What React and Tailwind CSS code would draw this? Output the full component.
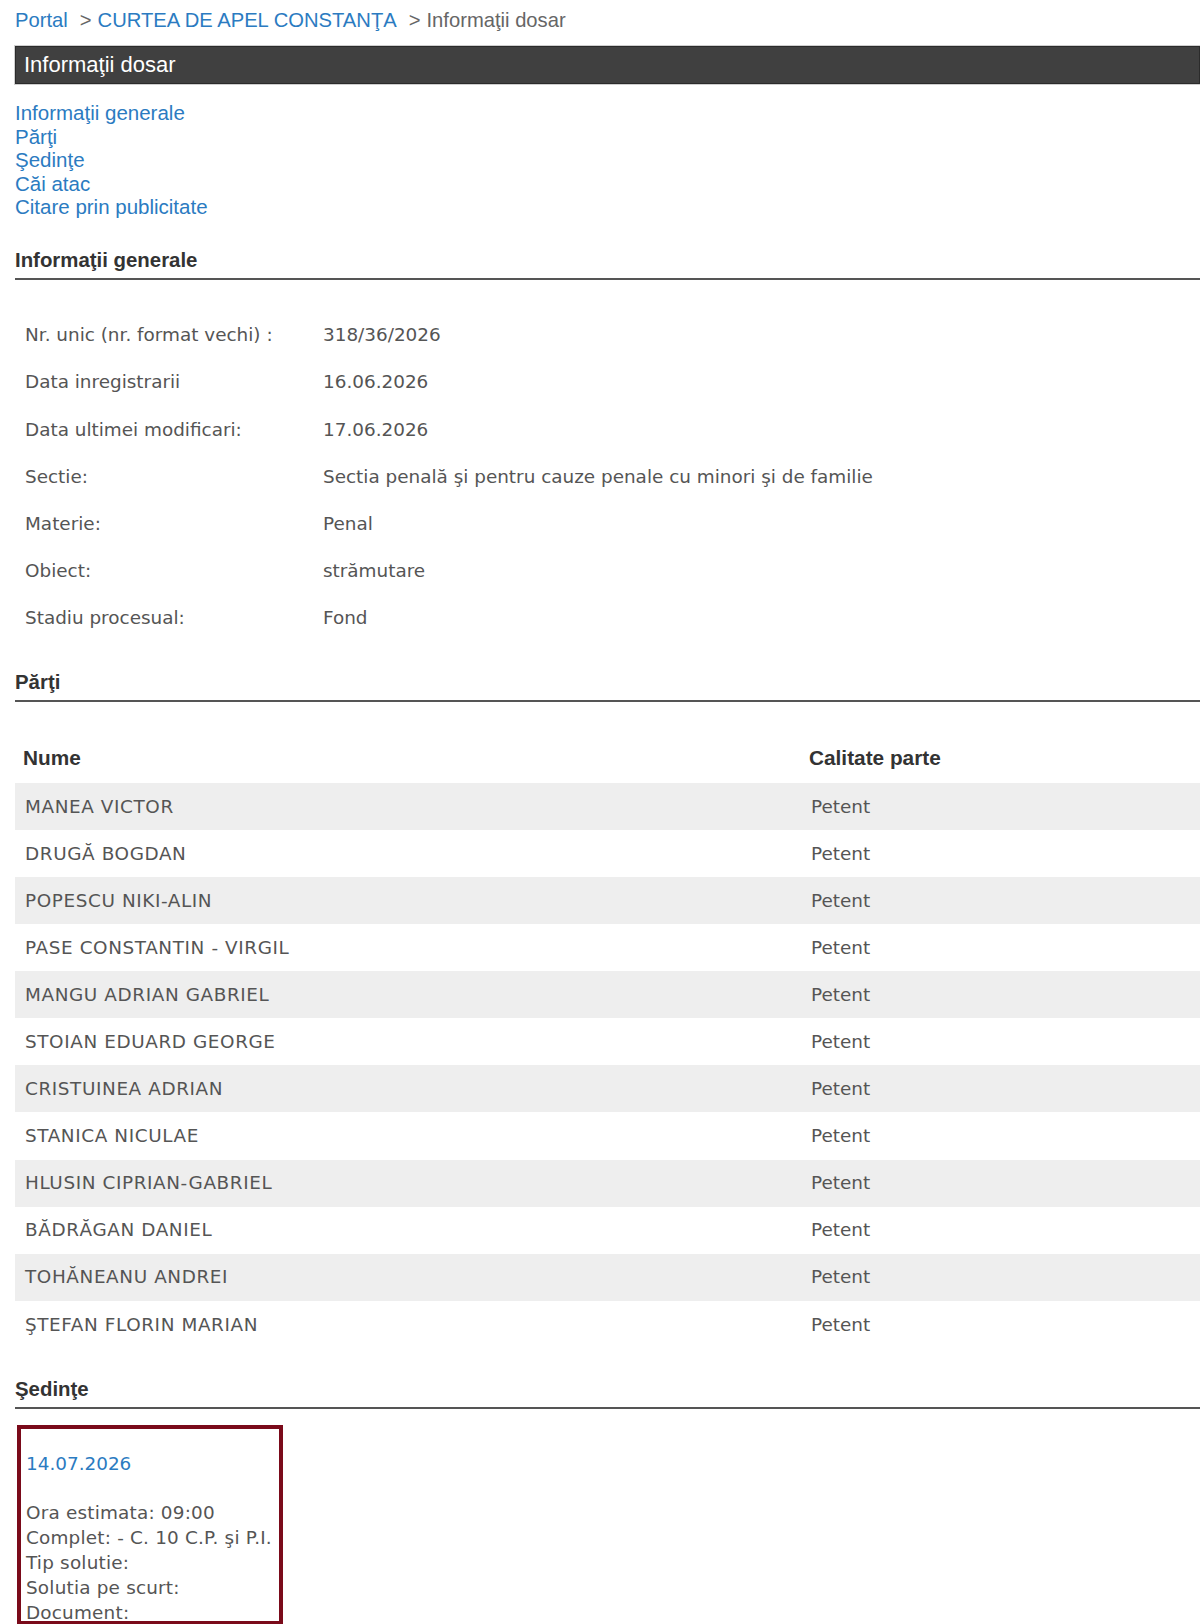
import React from 'react';

// Static case file page: breadcrumb, title bar, anchors, general info, parties, hearings
const LINKS = ['Informaţii generale', 'Părţi', 'Şedinţe', 'Căi atac', 'Citare prin publicitate'];

const GENERAL_INFO = [
    ['Nr. unic (nr. format vechi) :', '318/36/2026'],
    ['Data inregistrarii', '16.06.2026'],
    ['Data ultimei modificari:', '17.06.2026'],
    ['Sectie:', 'Sectia penală şi pentru cauze penale cu minori şi de familie'],
    ['Materie:', 'Penal'],
    ['Obiect:', 'strămutare'],
    ['Stadiu procesual:', 'Fond'],
];

const PARTIES = [
    'MANEA VICTOR',
    'DRUGĂ BOGDAN',
    'POPESCU NIKI-ALIN',
    'PASE CONSTANTIN - VIRGIL',
    'MANGU ADRIAN GABRIEL',
    'STOIAN EDUARD GEORGE',
    'CRISTUINEA ADRIAN',
    'STANICA NICULAE',
    'HLUSIN CIPRIAN-GABRIEL',
    'BĂDRĂGAN DANIEL',
    'TOHĂNEANU ANDREI',
    'ŞTEFAN FLORIN MARIAN',
];

const HEARING_LINES = [
    'Ora estimata: 09:00',
    'Complet: - C. 10 C.P. şi P.I.',
    'Tip solutie:',
    'Solutia pe scurt:',
    'Document:',
];

function SectionHeading({ children, className = '' }) {
    return (
        <div className={`pb-[6px] border-b-2 border-[#555555] ${className}`}>
            <h2 className="text-[20.4px] leading-6 font-bold text-[#333333]">{children}</h2>
        </div>
    );
}

export default function App() {
    return (
        <div className="min-h-[1624px] bg-white pl-[15px] pt-2 font-['Liberation_Sans',Arial,sans-serif] overflow-hidden">
            {/* breadcrumb */}
            <div className="flex items-center h-6 text-[20.2px] leading-6 whitespace-nowrap">
                <a className="text-[#2b7bc1]">Portal</a>
                <span className="ml-[12px] mr-[6px] text-[#666666]">&gt;</span>
                <a className="text-[#2b7bc1]">CURTEA DE APEL CONSTANŢA</a>
                <span className="ml-[12px] mr-[6px] text-[#666666]">&gt;</span>
                <span className="text-[#666666]">Informaţii dosar</span>
            </div>

            {/* title bar */}
            <div className="mt-[14px] h-[38px] flex items-center pl-2 bg-[#404040] border border-[#2b2b2b] shadow-[0_0_0_1px_#cfcfcf]">
                <span className="text-white text-[22px] leading-9">Informaţii dosar</span>
            </div>

            {/* anchors */}
            <nav className="mt-[17px] flex flex-col text-[20.5px] leading-[23.5px]">
                {LINKS.map(link => (
                    <a key={link} className="text-[#2b7bc1] w-fit">{link}</a>
                ))}
            </nav>

            <SectionHeading className="mt-[29px]">Informaţii generale</SectionHeading>

            <div className="mt-[32px] font-['DejaVu_Sans',sans-serif] text-[18.4px] text-[#555555]">
                {GENERAL_INFO.map(([label, value]) => (
                    <div key={label} className="h-[47.2px] pl-[10px] grid grid-cols-[298px_1fr] items-center">
                        <span>{label}</span>
                        <span>{value}</span>
                    </div>
                ))}
            </div>

            <SectionHeading className="mt-[28px]">Părţi</SectionHeading>

            <div className="mt-[31px]">
                <div className="h-[50px] grid grid-cols-[786px_1fr] items-center text-[20.8px] font-bold text-[#333333]">
                    <span className="pl-[8px]">Nume</span>
                    <span className="pl-[8px]">Calitate parte</span>
                </div>
                <div className="font-['DejaVu_Sans',sans-serif] text-[18.4px] text-[#555555]">
                    {PARTIES.map((name, i) => (
                        <div
                            key={name}
                            className={`h-[47.1px] grid grid-cols-[786px_1fr] items-center ${i % 2 === 0 ? 'bg-[#eeeeee]' : 'bg-white'}`}
                        >
                            <span className="pl-[10px] tracking-[0.6px]">{name}</span>
                            <span className="pl-[10px]">Petent</span>
                        </div>
                    ))}
                </div>
            </div>

            <SectionHeading className="mt-[29px]">Şedinţe</SectionHeading>

            {/* hearing card */}
            <div className="mt-[16px] ml-[2px] w-[266px] h-[200px] border-4 border-[#7a0a1a] overflow-hidden pl-[5px] pt-[23px] font-['DejaVu_Sans',sans-serif] text-[18.4px] whitespace-nowrap">
                <div className="leading-6 text-[#2b7bc1]">14.07.2026</div>
                <div className="mt-[24px] text-[#555555] tracking-[0.2px]">
                    {HEARING_LINES.map(line => (
                        <div key={line} className="leading-[25px]">{line}</div>
                    ))}
                </div>
            </div>
        </div>
    );
}
